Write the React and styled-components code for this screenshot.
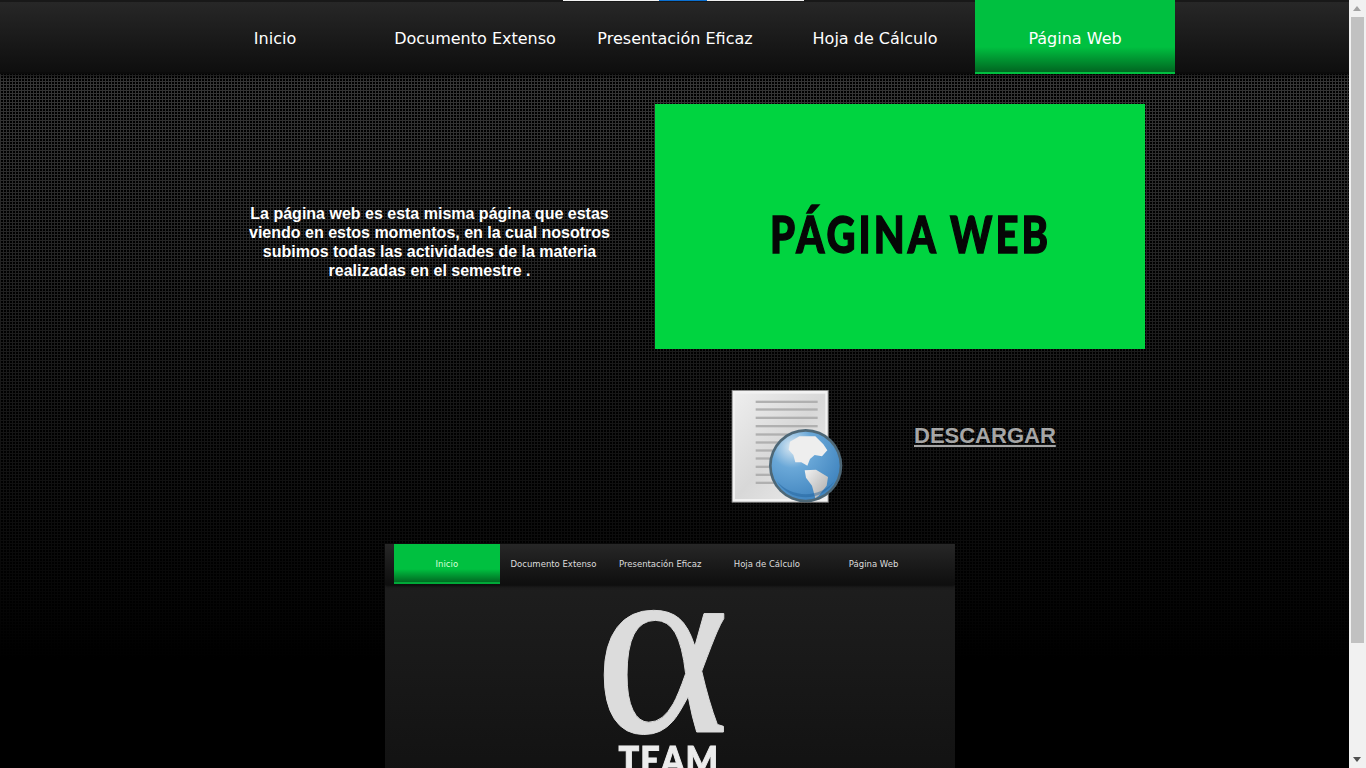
import React from "react";
import styled, { createGlobalStyle } from "styled-components";

const Global = createGlobalStyle`
  html, body { margin: 0; padding: 0; height: 100%; overflow: hidden; background: #000; }
  #root { height: 100%; }
`;

const Shell = styled.div`
  display: flex;
  width: 100%;
  height: 768px;
  overflow: hidden;
`;

const Page = styled.div`
  flex: 1;
  min-width: 0;
  height: 768px;
  overflow: hidden;
  background-color: #000;
  background-image:
    linear-gradient(to bottom, rgba(0,0,0,0) 74px, rgba(0,0,0,0.42) 300px, rgba(0,0,0,0.72) 500px, #000 660px),
    linear-gradient(to right, #363636 1px, transparent 1px),
    linear-gradient(to bottom, #363636 1px, transparent 1px);
  background-size: 100% 100%, 3px 3px, 3px 3px;
`;

const NavBar = styled.nav`
  height: 74px;
  box-sizing: border-box;
  border-top: 2px solid #181818;
  border-bottom: 2px solid #0b0b0b;
  background: linear-gradient(to bottom, #272727, #0e0e0e);
  box-shadow: 0 2px 5px rgba(0,0,0,.7);
  position: relative;
`;

const TopStrip = styled.div`
  position: absolute;
  top: -2px;
  left: 563px;
  display: flex;
  height: 1px;
`;

const StripPart = styled.span`
  display: block;
  width: ${p => p.$w}px;
  background: ${p => p.$c};
`;

const NavInner = styled.div`
  display: flex;
  width: 1000px;
  margin: -2px 0 0 175px;
  height: 74px;
`;

const NavItem = styled.a`
  width: 200px;
  height: 74px;
  box-sizing: border-box;
  display: flex;
  align-items: center;
  justify-content: center;
  padding-top: 2px;
  font-family: "DejaVu Sans", Verdana, sans-serif;
  font-size: 16px;
  color: #fff;
  position: relative;
  ${p => p.$active && `
    background: linear-gradient(to bottom, #00c040 0, #00c040 47px, #006a22 71px, #006a22 72px, #00c040 72px, #00c040 74px);
  `}
`;

const Content = styled.main`
  width: 1000px;
  margin: 0 0 0 175px;
`;

const IntroRow = styled.section`
  display: flex;
  gap: 40px;
  padding: 30px 0 0 70px;
`;

const Intro = styled.p`
  width: 370px;
  margin: 100px 0 0 -0.5px;
  text-align: center;
  font: bold 16px/19px "Liberation Sans", Arial, sans-serif;
  color: #fff;
`;

const Banner = styled.div`
  width: 490px;
  height: 245px;
  background: #00d440;
  display: flex;
  align-items: center;
  justify-content: center;
  padding-left: 23px;
  box-sizing: border-box;
`;

const BannerTitle = styled.h1`
  margin: 0;
  font: 900 52px/1 "Lato", "Liberation Sans", sans-serif;
  letter-spacing: 4px;
  -webkit-text-stroke: 1.4px #060606;
  color: #060606;
  white-space: nowrap;
  transform: scaleX(0.77);
  position: relative;
  top: 6px;
`;

const DownloadRow = styled.section`
  display: flex;
  gap: 71px;
  padding: 41px 0 0 556px;
`;

const DocIcon = styled.svg`
  display: block;
  width: 112px;
  height: 114px;
  flex: none;
  overflow: visible;
`;

const Download = styled.a`
  margin-top: 33px;
  font: bold 22px/26px "Liberation Sans", Arial, sans-serif;
  color: #a6a6a6;
  text-decoration: underline;
`;

const ShotRow = styled.section`
  padding: 40px 0 0 210px;
`;

const Shot = styled.div`
  width: 570px;
  height: 330px;
  overflow: hidden;
  background: linear-gradient(to bottom, #202020, #121212 230px);
`;

const ShotNav = styled.div`
  display: flex;
  height: 41px;
  box-sizing: border-box;
  padding-left: 8.5px;
  background: linear-gradient(to bottom, #272727, #0e0e0e);
  box-shadow: 0 1px 3px rgba(0,0,0,.7);
`;

const ShotItem = styled.span`
  width: 106.7px;
  height: 40px;
  display: flex;
  align-items: center;
  justify-content: center;
  box-sizing: border-box;
  font-family: "DejaVu Sans", Verdana, sans-serif;
  font-size: 8.5px;
  color: #ddd;
  ${p => p.$active && `
    background: linear-gradient(to bottom, #00c040 0, #00c040 25px, #006a22 38px, #00a838 38px, #00a838 40px);
    color: #d8ffd8;
  `}
`;

const Logo = styled.div`
  display: flex;
  flex-direction: column;
  align-items: center;
`;

const Alpha = styled.span`
  font: 400 258px/150px "Liberation Serif", "DejaVu Serif", serif;
  -webkit-text-stroke: 1px #dcdcdc;
  color: #dcdcdc;
  margin: -15px 16px 0 0;
  height: 170px;
`;

const Team = styled.span`
  font: 900 38px/1 "Lato", "Liberation Sans", sans-serif;
  -webkit-text-stroke: 1px #ececec;
  color: #ececec;
  letter-spacing: 1px;
  margin-right: 3px;
  transform: scaleX(0.9);
`;

const Scrollbar = styled.aside`
  width: 17px;
  flex: none;
  height: 768px;
  background: #f1f1f1;
  position: relative;
`;

const Arrow = styled.span`
  position: absolute;
  left: 4px;
  ${p => p.$up ? "top: 6px; border-bottom: 5px solid #a3a3a3;" : "bottom: 6px; border-top: 5px solid #505050;"}
  border-left: 4px solid transparent;
  border-right: 4px solid transparent;
`;

const Thumb = styled.span`
  position: absolute;
  top: 17px;
  left: 2px;
  width: 13px;
  height: 626px;
  background: #c1c1c1;
`;

const labels = ["Inicio", "Documento Extenso", "Presentación Eficaz", "Hoja de Cálculo", "Página Web"];

function Doc() {
  const ys = [80, 103, 128, 153, 178, 202, 226, 250, 275, 299, 323];
  return (
    <DocIcon viewBox="63 45 336 342">
      <defs>
        <radialGradient id="g" cx="0.3" cy="0.22" r="0.9">
          <stop offset="0" stopColor="#dbe9f3" />
          <stop offset="0.35" stopColor="#6aa8d8" />
          <stop offset="1" stopColor="#3a7fbb" />
        </radialGradient>
        <linearGradient id="p" x1="0" y1="0" x2="1" y2="1">
          <stop offset="0" stopColor="#eeeeee" />
          <stop offset="0.5" stopColor="#d8d8d8" />
          <stop offset="1" stopColor="#ededed" />
        </linearGradient>
        <linearGradient id="sa" x1="0" y1="0" x2="1" y2="1">
          <stop offset="0" stopColor="#f2f2f2" />
          <stop offset="1" stopColor="#a9a9a9" />
        </linearGradient>
        <filter id="soft"><feGaussianBlur stdDeviation="2" /></filter>
      </defs>
      <rect x="65" y="45" width="291" height="338" fill="#8f8f8f" />
      <rect x="68" y="48" width="285" height="332" fill="#f2f2f2" />
      <rect x="75" y="56" width="271" height="316" fill="url(#p)" />
      {ys.map(y => <rect key={y} x="137" y={y - 3} width="186" height="7" fill="#b0b0b0" />)}
      <circle cx="287" cy="272" r="110" fill="#4d6776" />
      <circle cx="287" cy="272" r="102" fill="url(#g)" />
      <g filter="url(#soft)">
        <path d="M240 200 L268 184 L316 184 L340 208 L352 226 L336 244 L314 240 L300 252 L292 272 L274 262 L256 262 L250 240 L236 224 Z" fill="#eeeeee" />
        <path d="M284 286 L318 284 L354 306 L350 332 L326 362 L316 370 L306 332 L288 308 Z" fill="url(#sa)" />
      </g>
      <path d="M200 318 A102 102 0 0 0 374 318 A115 115 0 0 1 200 318 Z" fill="#1f5f99" opacity=".45" />
    </DocIcon>
  );
}

export default function App() {
  return (
    <Shell>
      <Global />
      <Page>
        <NavBar>
          <TopStrip>
            <StripPart $w={96} $c="#f4f4f4" />
            <StripPart $w={48} $c="#0a6fd0" />
            <StripPart $w={97} $c="#f0f0f0" />
          </TopStrip>
          <NavInner>
            {labels.map(l => <NavItem key={l} $active={l === "Página Web"}>{l}</NavItem>)}
          </NavInner>
        </NavBar>
        <Content>
          <IntroRow>
            <Intro>La página web es esta misma página que estas viendo en estos momentos, en la cual nosotros subimos todas las actividades de la materia realizadas en el semestre .</Intro>
            <Banner><BannerTitle>PÁGINA WEB</BannerTitle></Banner>
          </IntroRow>
          <DownloadRow>
            <Doc />
            <Download>DESCARGAR</Download>
          </DownloadRow>
          <ShotRow>
            <Shot>
              <ShotNav>
                {labels.map(l => <ShotItem key={l} $active={l === "Inicio"}>{l}</ShotItem>)}
              </ShotNav>
              <Logo>
                <Alpha>α</Alpha>
                <Team>TEAM</Team>
              </Logo>
            </Shot>
          </ShotRow>
        </Content>
      </Page>
      <Scrollbar>
        <Arrow $up />
        <Thumb />
        <Arrow />
      </Scrollbar>
    </Shell>
  );
}
